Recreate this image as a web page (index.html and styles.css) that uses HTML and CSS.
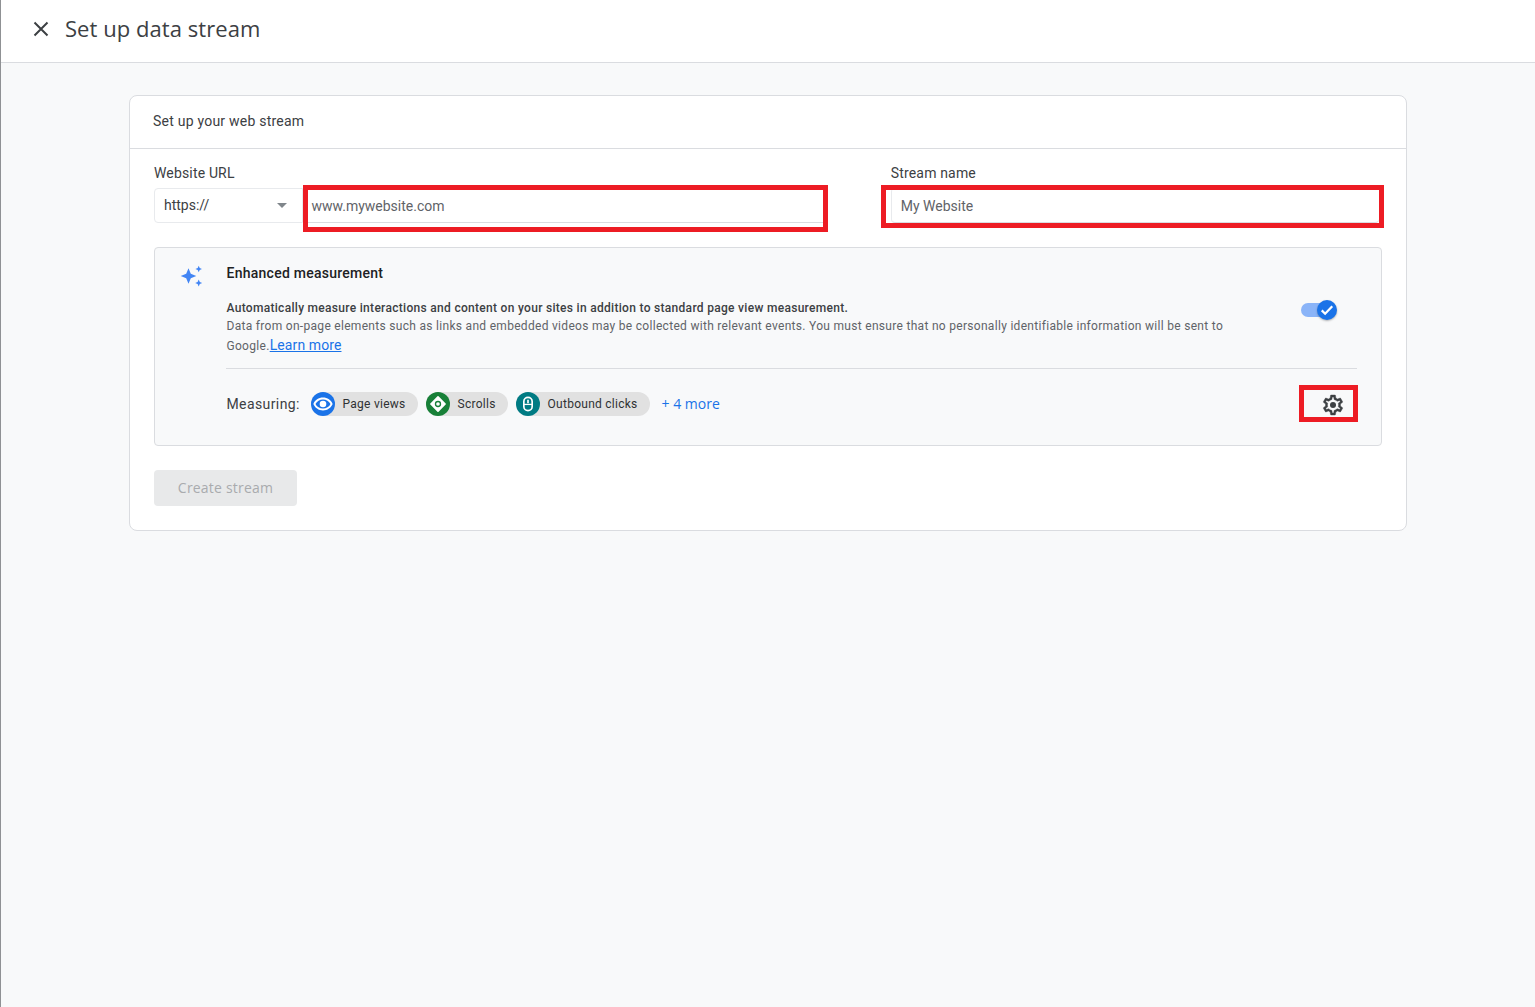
FILE: index.html
```html
<!DOCTYPE html>
<html lang="en">
<head>
<meta charset="utf-8">
<title>Set up data stream</title>
<link rel="stylesheet" href="styles.css">
</head>
<body>
<div class="app">
  <header class="topbar">
    <svg class="close" viewBox="0 0 24 24" width="24" height="24"><path d="M5.500 5.500l13 13M18.500 5.500l-13 13" fill="none" stroke="#3c4043" stroke-width="2"/></svg>
    <h1 class="title">Set up data stream</h1>
  </header>
  <main class="content">
    <section class="card">
      <div class="card-head">Set up your web stream</div>
      <div class="card-body">
        <div class="fields">
          <div class="field-url">
            <label class="label">Website URL</label>
            <div class="url-row">
              <div class="select"><span>https://</span><i class="caret"></i></div>
              <div class="input input-url"><span class="val">www.mywebsite.com</span><span class="mark mark-url"></span></div>
            </div>
          </div>
          <div class="field-name">
            <label class="label">Stream name</label>
            <div class="input input-name"><span class="val">My Website</span><span class="mark mark-name"></span></div>
          </div>
        </div>
        <div class="enhanced">
          <div class="spark">
            <svg viewBox="0 0 24 24" width="24" height="24"><path fill="#4285f4" d="M9.500 4.200l2.300 5.500 5.500 2.300-5.500 2.300-2.300 5.500-2.300-5.500L1.700 12l5.500-2.300zM19.700 1.700l1 2.300 2.300 1-2.300 1-1 2.300-1-2.300-2.300-1 2.300-1zM19.700 15.500l1.100 2.400 2.400 1.100-2.400 1.100-1.100 2.400-1.100-2.400-2.400-1.100 2.400-1.100z"/></svg>
          </div>
          <div class="enh-main">
            <h2 class="enh-title">Enhanced measurement</h2>
            <div class="enh-desc-row">
              <div class="enh-desc">
                <p class="strong">Automatically measure interactions and content on your sites in addition to standard page view measurement.</p>
                <p class="plain">Data from on-page elements such as links and embedded videos may be collected with relevant events. You must ensure that no personally identifiable information will be sent to</p>
                <p class="plain last">Google.<a class="learn" href="#">Learn more</a></p>
              </div>
              <div class="toggle">
                <span class="track"></span>
                <span class="thumb"><svg viewBox="0 0 24 24" width="18" height="18"><path d="M5 12.500l4.500 4.500L19 7" fill="none" stroke="#fff" stroke-width="3"/></svg></span>
              </div>
            </div>
            <div class="measuring">
              <span class="m-label">Measuring:</span>
              <span class="chip">
                <span class="chip-ic blue"><svg viewBox="0 0 24 24" width="22" height="22"><path fill="#fff" d="M12 5c-4.800 0-8.900 2.900-10.500 7 1.600 4.100 5.700 7 10.500 7s8.900-2.900 10.500-7C20.900 7.900 16.800 5 12 5zm0 12c-3.600 0-6.700-1.900-8.200-5 1.500-3.100 4.600-5 8.200-5s6.700 1.900 8.200 5c-1.500 3.100-4.600 5-8.200 5z"/><circle cx="12" cy="12" r="3.600" fill="#fff"/></svg></span>
                <span class="chip-text">Page views</span>
              </span>
              <span class="chip">
                <span class="chip-ic green"><svg viewBox="0 0 24 24" width="20" height="20"><path fill="#fff" stroke="#fff" stroke-width="2" stroke-linejoin="round" d="M12 3.500l8.500 8.500-8.500 8.500L3.500 12z"/><circle cx="12" cy="12" r="3.800" fill="#188038"/><circle cx="12" cy="12" r="2.200" fill="#fff"/></svg></span>
                <span class="chip-text">Scrolls</span>
              </span>
              <span class="chip">
                <span class="chip-ic teal"><svg viewBox="0 0 24 24" width="20" height="20"><rect x="7" y="4" width="10" height="16" rx="5" fill="none" stroke="#fff" stroke-width="2"/><path d="M12 7v4" stroke="#fff" stroke-width="2"/><path d="M7 12.500h10" stroke="#fff" stroke-width="1.500"/></svg></span>
                <span class="chip-text">Outbound clicks</span>
              </span>
              <a class="more" href="#">+ 4 more</a>
              <span class="gear">
                <svg viewBox="0 0 24 24" width="24" height="24"><path fill="#3c4043" stroke="#3c4043" stroke-width=".4" d="M19.430 12.980c.04-.32.07-.64.07-.98 0-.34-.03-.66-.07-.98l2.110-1.650c.19-.15.24-.42.12-.64l-2-3.460c-.09-.16-.26-.25-.44-.25-.06 0-.12.01-.17.03l-2.490 1c-.52-.4-1.080-.73-1.690-.98l-.38-2.650C14.460 2.180 14.250 2 14 2h-4c-.25 0-.46.18-.49.42l-.38 2.650c-.61.25-1.170.59-1.690.98l-2.490-1c-.06-.02-.12-.03-.18-.03-.17 0-.34.09-.43.25l-2 3.460c-.13.22-.07.49.12.64l2.110 1.650c-.04.32-.07.65-.07.98 0 .33.03.66.07.98l-2.110 1.650c-.19.15-.24.42-.12.64l2 3.460c.09.16.26.25.44.25.06 0 .12-.01.17-.03l2.490-1c.52.4 1.080.73 1.690.98l.38 2.650c.03.24.24.42.49.42h4c.25 0 .46-.18.49-.42l.38-2.650c.61-.25 1.170-.59 1.690-.98l2.490 1c.06.02.12.03.18.03.17 0 .34-.09.43-.25l2-3.460c.12-.22.07-.49-.12-.64l-2.110-1.650zm-1.980-1.710c.04.31.05.52.05.73 0 .21-.02.43-.05.73l-.14 1.130.89.7 1.080.84-.7 1.210-1.270-.51-1.040-.42-.9.68c-.43.32-.84.56-1.250.73l-1.060.43-.16 1.130-.2 1.350h-1.400l-.19-1.350-.16-1.130-1.060-.43c-.43-.18-.83-.41-1.230-.71l-.91-.7-1.060.43-1.270.51-.7-1.210 1.080-.84.89-.7-.14-1.130c-.03-.31-.05-.54-.05-.74s.02-.43.05-.73l.14-1.130-.89-.7-1.080-.84.7-1.210 1.270.51 1.040.42.9-.68c.43-.32.84-.56 1.250-.73l1.060-.43.16-1.130.2-1.350h1.390l.19 1.350.16 1.130 1.060.43c.43.18.83.41 1.230.71l.91.7 1.060-.43 1.270-.51.7 1.210-1.070.85-.89.7.14 1.130z"/><circle cx="12" cy="12" r="3" fill="#3c4043"/></svg>
                <span class="mark mark-gear"></span>
              </span>
            </div>
          </div>
        </div>
        <button class="create" disabled>Create stream</button>
      </div>
    </section>
  </main>
</div>
</body>
</html>
```
FILE: styles.css
```css
* { box-sizing: border-box; }
html, body { margin: 0; padding: 0; height: 100%; }
body { font-family: Roboto, "Liberation Sans", sans-serif; color: #3c4043; background: #fff; }
p, h1, h2 { margin: 0; }
.app { height: 1007px; display: flex; flex-direction: column; border-left: 1px solid #8f9194; overflow: hidden; }
.topbar { height: 63px; flex: none; display: flex; align-items: center; padding: 0 0 4px 28px; background: #fff; border-bottom: 1px solid #dadce0; }
.close { flex: none; }
.title { margin-left: 12px; font: 400 22px/28px "Open Sans", Roboto, sans-serif; letter-spacing: .06px; color: #3c4043; position: relative; top: -1px; }
.content { flex: 1; background: #f8f9fa; padding: 32px 128px 0 128px; }
.card { width: 1278px; height: 436px; background: #fff; border: 1px solid #dadce0; border-radius: 8px; }
.card-head { height: 53px; padding: 0 23px 2px; display: flex; align-items: center; font-size: 14px; letter-spacing: .23px; border-bottom: 1px solid #dadce0; }
.card-body { padding: 0 24px; }
.fields { display: flex; height: 98px; }
.field-url { width: 737px; }
.field-name { width: 493px; padding-left: 1px; }
.label { display: block; font-size: 14px; line-height: 20px; letter-spacing: .16px; padding-top: 14px; height: 39px; }
.url-row { display: flex; }
.select { width: 149px; height: 35px; display: flex; align-items: center; justify-content: space-between; padding: 0 15px 2px 9px; font-size: 14px; border: 1px solid #e8eaed; border-radius: 4px 0 0 4px; }
.caret { width: 0; height: 0; border-left: 5px solid transparent; border-right: 5px solid transparent; border-top: 5px solid #80868b; margin-top: 2px; }
.input { position: relative; height: 35px; display: flex; align-items: center; font-size: 14px; color: #5f6368; border-bottom: 1px solid #dadce0; background: #fff; }
.val { position: relative; top: 1px; }
.input-url { width: 522px; padding-left: 8.5px; }
.input-name { width: 488px; padding-left: 9px; border-left: 1px solid #e8eaed; border-radius: 4px; }
.mark { position: absolute; border: 5px solid #ed1c24; pointer-events: none; }
.mark-url { left: 0; top: -3px; width: 525px; height: 47px; }
.mark-name { left: -11px; top: -3px; width: 503px; height: 43px; }
.mark-gear { left: -22px; top: -7px; width: 59px; height: 37px; }
.enhanced { height: 199px; display: flex; background: #f8f9fa; border: 1px solid #dadce0; border-radius: 4px; padding: 0 24px 0 24px; }
.spark { width: 47px; flex: none; padding-top: 16px; }
.spark svg { display: block; }
.enh-main { flex: 1; min-width: 0; }
.enh-title { font-size: 14px; font-weight: 500; line-height: 20px; letter-spacing: .25px; color: #202124; padding: 15px 0 0 .5px; height: 47px; }
.enh-desc-row { display: flex; justify-content: space-between; height: 74px; border-bottom: 1px solid #dadce0; padding-top: 4px; }
.enh-desc { padding-left: .5px; }
.strong { font-size: 12px; font-weight: 500; line-height: 18px; letter-spacing: .3px; }
.plain { font-size: 12px; line-height: 18px; letter-spacing: .3px; color: #5f6368; white-space: nowrap; }
.last { line-height: 21px; }
.learn { font-size: 14px; color: #1a73e8; letter-spacing: .1px; text-decoration: underline; }
.toggle { position: relative; width: 36px; height: 24px; margin: -1px 20px 0 0; flex: none; }
.track { position: absolute; left: 0; top: 5px; width: 30px; height: 14px; border-radius: 7px; background: #8ab4f8; }
.thumb { position: absolute; left: 16px; top: 2px; width: 20px; height: 20px; border-radius: 50%; background: #1a73e8; display: flex; align-items: center; justify-content: center; box-shadow: 0 1px 2px rgba(60,64,67,.4); }
.measuring { display: flex; align-items: center; height: 71px; padding-bottom: 1px; }
.m-label { font-size: 14px; letter-spacing: .4px; margin: 0 11.5px 0 .5px; width: 72.5px; white-space: nowrap; }
.chip { display: flex; align-items: center; height: 24px; background: #e1e1e1; border-radius: 12px; margin-right: 8px; padding-right: 12px; }
.chip-ic { width: 24px; height: 24px; border-radius: 50%; display: flex; align-items: center; justify-content: center; flex: none; margin-right: 8px; }
.blue { background: #1a73e8; }
.green { background: #188038; }
.teal { background: #007b83; }
.chip-text { font-size: 12px; letter-spacing: .26px; color: #2f3133; }
.more { font: 400 14px "Open Sans", Roboto, sans-serif; color: #1a73e8; text-decoration: none; margin: 0 0 2px 4px; }
.gear { position: relative; margin-left: auto; margin-right: 12px; width: 24px; height: 24px; }
.gear svg { display: block; margin-top: .5px; }
.create { display: block; margin-top: 24px; padding: 0 0 2px; width: 143px; height: 36px; border: 0; border-radius: 4px; background: #e8e9ea; color: #a9abae; font: 400 14px "Open Sans", Roboto, sans-serif; letter-spacing: .2px; }
```
